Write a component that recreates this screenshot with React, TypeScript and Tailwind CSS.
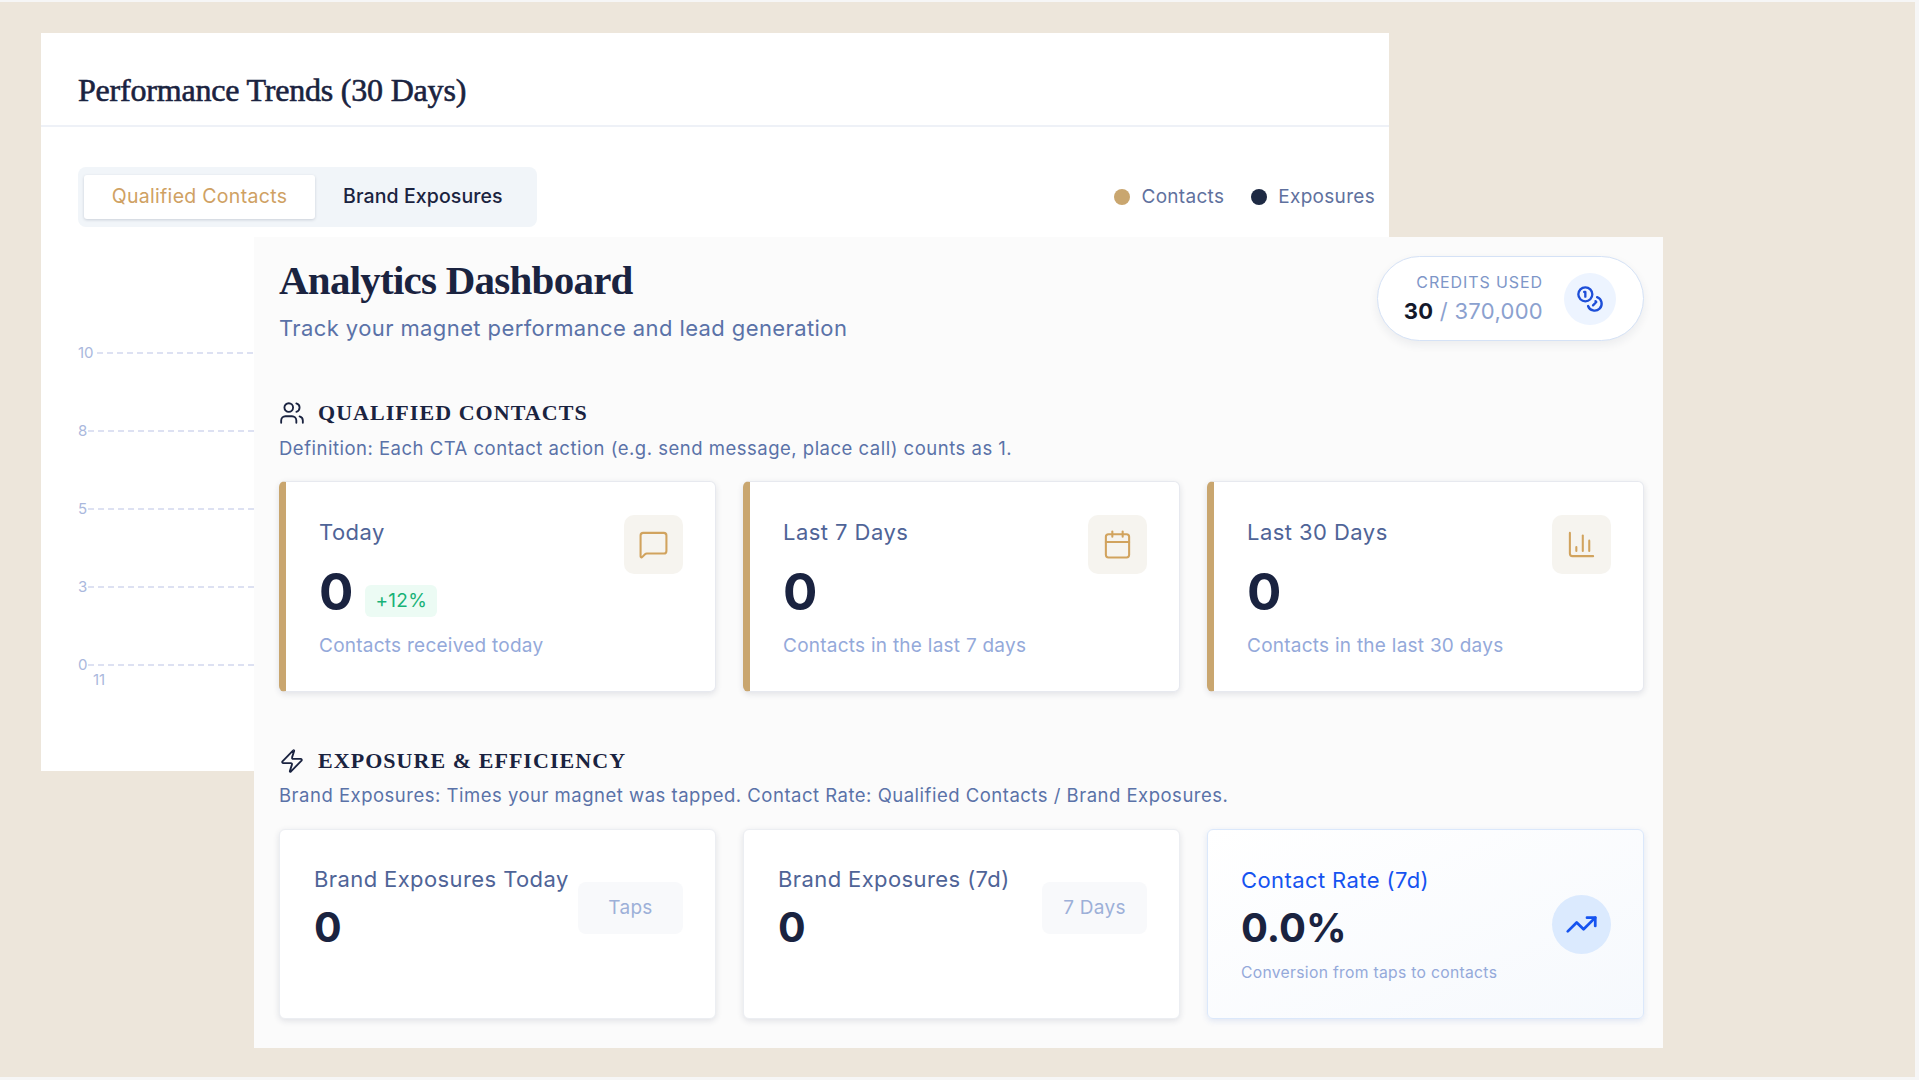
import { BarChart3, Calendar, Coins, MessageSquare, TrendingUp, Users, Zap } from 'lucide-react'

const serif = "font-['Liberation_Serif',serif]"

function ContactCard({ label, desc, badge, icon }: { label: string; desc: string; badge?: string; icon: React.ReactNode }) {
  return (
    <div className="h-[211px] rounded-md border border-[#e7e9ef] border-l-[7px] border-l-[#c9a66f] bg-white pl-[33px] pr-[32px] pt-[33px] shadow-[0_2px_6px_rgba(30,40,70,0.12)]">
      <div className="flex items-start justify-between">
        <div>
          <div className="mt-[1px] text-[22px] leading-[32px] tracking-[0.45px] text-[#4f6497]">{label}</div>
          <div className="mt-[13px] flex items-end gap-[12px]">
            <span className="text-[51px] font-bold leading-[62px] text-[#1a2340]">0</span>
            {badge && (
              <span className="mb-[6px] rounded-md bg-[#ecfbf4] px-[10px] py-[3px] text-[19px] leading-[26px] tracking-[0.3px] text-[#18b277]">{badge}</span>
            )}
          </div>
        </div>
        <div className="flex size-[59px] items-center justify-center rounded-[10px] bg-[#f6f4ef] text-[#d1a35e]">{icon}</div>
      </div>
      <div className="mt-[8px] text-[19px] leading-[30px] tracking-[0.25px] text-[#94a9da]">{desc}</div>
    </div>
  )
}

function ExposureCard({ label, chip }: { label: string; chip: string }) {
  return (
    <div className="flex h-[190px] items-start justify-between rounded-md border border-[#eceef2] bg-white pl-[34px] pr-[32px] pt-[33px] shadow-[0_2px_6px_rgba(30,40,70,0.12)]">
      <div>
        <div className="whitespace-nowrap text-[22px] leading-[32px] tracking-[0.4px] text-[#4f6497]">{label}</div>
        <div className="mt-[7px] text-[41px] font-bold leading-[50px] text-[#1a2340]">0</div>
      </div>
      <div className="mt-[19px] flex h-[52px] w-[105px] shrink-0 items-center justify-center rounded-lg bg-[#f8f9fb] text-[19px] tracking-[0.3px] text-[#9db0d8]">{chip}</div>
    </div>
  )
}

export default function App() {
  const gridLines = [
    { y: 353, label: '10', start: 97 },
    { y: 431, label: '8', start: 88 },
    { y: 509, label: '5', start: 88 },
    { y: 587, label: '3', start: 88 },
    { y: 665, label: '0', start: 88 },
  ]

  return (
    <div className="relative h-[1080px] w-[1919px] overflow-hidden bg-[#ede6db] font-['Inter',sans-serif]">
      {/* pale edges of the screenshot */}
      <div className="absolute inset-x-0 top-0 h-[2px] bg-[#f6f6f6]" />
      <div className="absolute inset-y-0 right-0 w-[4px] bg-[#f6f6f6]" />
      <div className="absolute inset-x-0 bottom-0 h-[3px] bg-[#f6f6f6]" />

      {/* back window */}
      <div className="absolute left-[41px] top-[33px] h-[738px] w-[1348px] bg-white">
        <div className="flex h-[94px] items-center border-b-2 border-[#eef1f7] pl-[37px] pt-[22px]">
          <h2 className={`${serif} text-[32px] font-normal tracking-[-0.2px] text-[#1a2340] [-webkit-text-stroke:0.6px_#1a2340]`}>Performance Trends (30 Days)</h2>
        </div>
        <div className="flex items-center justify-between pl-[37px] pr-[14px] pt-[40px]">
          <div className="flex h-[60px] w-[459px] items-center rounded-lg bg-[#f1f5f9] pl-[6px]">
            <div className="flex h-[44px] w-[231px] items-center justify-center rounded-[3px] bg-white text-[19.5px] tracking-[0.3px] text-[#cfa163] shadow-[0_1px_3px_rgba(30,40,70,0.18)]">Qualified Contacts</div>
            <div className="ml-[28px] text-[19.5px] font-medium tracking-[0.1px] text-[#1a2340]">Brand Exposures</div>
          </div>
          <div className="flex items-center text-[19px] tracking-[0.3px] text-[#5f719e]">
            <span className="size-[16px] rounded-full bg-[#c9a66f]" />
            <span className="ml-[11px]">Contacts</span>
            <span className="ml-[27px] size-[16px] rounded-full bg-[#1e2a44]" />
            <span className="ml-[11px]">Exposures</span>
          </div>
        </div>
        <svg className="absolute left-0 top-0" width="1348" height="738" viewBox="41 33 1348 738">
          {gridLines.map((l) => (
            <g key={l.label}>
              <line x1={l.start} x2="254" y1={l.y} y2={l.y} stroke="#dde1f2" strokeWidth="2" strokeDasharray="6 4" />
              <text x="78" y={l.y + 5} fontSize="15" fill="#aab8dd" fontFamily="Inter">{l.label}</text>
            </g>
          ))}
          <text x="93" y="685" fontSize="15" fill="#aab8dd" fontFamily="Inter">11</text>
        </svg>
      </div>

      {/* front window */}
      <div className="absolute left-[254px] top-[237px] h-[811px] w-[1409px] bg-[#fbfbfb] pl-[25px] pr-[19px] pt-[19px]">
        <div className="flex items-start justify-between">
          <div>
            <h1 className={`${serif} mt-[-1px] text-[41px] font-bold leading-[50px] tracking-[-0.75px] text-[#1a2340]`}>Analytics Dashboard</h1>
            <p className="mt-[7px] text-[22px] leading-[32px] tracking-[0.4px] text-[#5a72a8]">Track your magnet performance and lead generation</p>
          </div>
          <div className="flex h-[85px] w-[267px] items-center justify-end rounded-full border border-[#d5e2f6] bg-white pr-[27px] shadow-[0_4px_10px_rgba(30,40,70,0.07)]">
            <div className="text-right">
              <div className="text-[16px] leading-[23px] tracking-[0.9px] text-[#7e96c8]">CREDITS USED</div>
              <div className="mt-[1px] text-[22px] leading-[32px] tracking-[0.3px] text-[#8ba1cf]">
                <span className="font-bold text-[#14192b]">30</span> / 370,000
              </div>
            </div>
            <div className="ml-[21px] flex size-[52px] items-center justify-center rounded-full bg-[#edf4ff] text-[#1d4ed8]">
              <Coins size={28} strokeWidth={2} />
            </div>
          </div>
        </div>

        <div className="mt-[52px] flex items-center gap-[13px] text-[#1a2340]">
          <Users size={26} strokeWidth={1.7} />
          <h3 className={`${serif} text-[22px] font-bold uppercase tracking-[1.05px]`}>Qualified Contacts</h3>
        </div>
        <p className="mt-[4px] text-[18.5px] leading-[30px] tracking-[0.5px] text-[#5a72a8]">Definition: Each CTA contact action (e.g. send message, place call) counts as 1.</p>

        <div className="mt-[18px] grid grid-cols-3 gap-[27px]">
          <ContactCard label="Today" desc="Contacts received today" badge="+12%" icon={<MessageSquare size={31} strokeWidth={1.6} />} />
          <ContactCard label="Last 7 Days" desc="Contacts in the last 7 days" icon={<Calendar size={31} strokeWidth={1.6} />} />
          <ContactCard label="Last 30 Days" desc="Contacts in the last 30 days" icon={<BarChart3 size={31} strokeWidth={1.6} />} />
        </div>

        <div className="mt-[52px] flex items-center gap-[13px] text-[#1a2340]">
          <Zap size={26} strokeWidth={1.7} />
          <h3 className={`${serif} text-[22px] font-bold uppercase tracking-[1.05px]`}>Exposure &amp; Efficiency</h3>
        </div>
        <p className="mt-[3px] text-[18.5px] leading-[30px] tracking-[0.5px] text-[#5a72a8]">Brand Exposures: Times your magnet was tapped. Contact Rate: Qualified Contacts / Brand Exposures.</p>

        <div className="mt-[19px] grid grid-cols-3 gap-[27px]">
          <ExposureCard label="Brand Exposures Today" chip="Taps" />
          <ExposureCard label="Brand Exposures (7d)" chip="7 Days" />
          <div className="flex h-[190px] items-center justify-between rounded-md border border-[#dbe8fb] bg-gradient-to-br from-white to-[#f6f9fd] pl-[33px] pr-[32px] shadow-[0_2px_6px_rgba(60,100,190,0.14)]">
            <div>
              <div className="text-[22px] leading-[32px] tracking-[0.4px] text-[#1553f0]">Contact Rate (7d)</div>
              <div className="mt-[7px] text-[40px] font-bold leading-[50px] text-[#1a2340]">0.0%</div>
              <div className="mt-[8px] text-[15.7px] leading-[24px] tracking-[0.3px] text-[#94a9da]">Conversion from taps to contacts</div>
            </div>
            <div className="flex size-[59px] items-center justify-center rounded-full bg-[#dbeafe] text-[#1553f0]">
              <TrendingUp size={33} strokeWidth={2} />
            </div>
          </div>
        </div>
      </div>
    </div>
  )
}
